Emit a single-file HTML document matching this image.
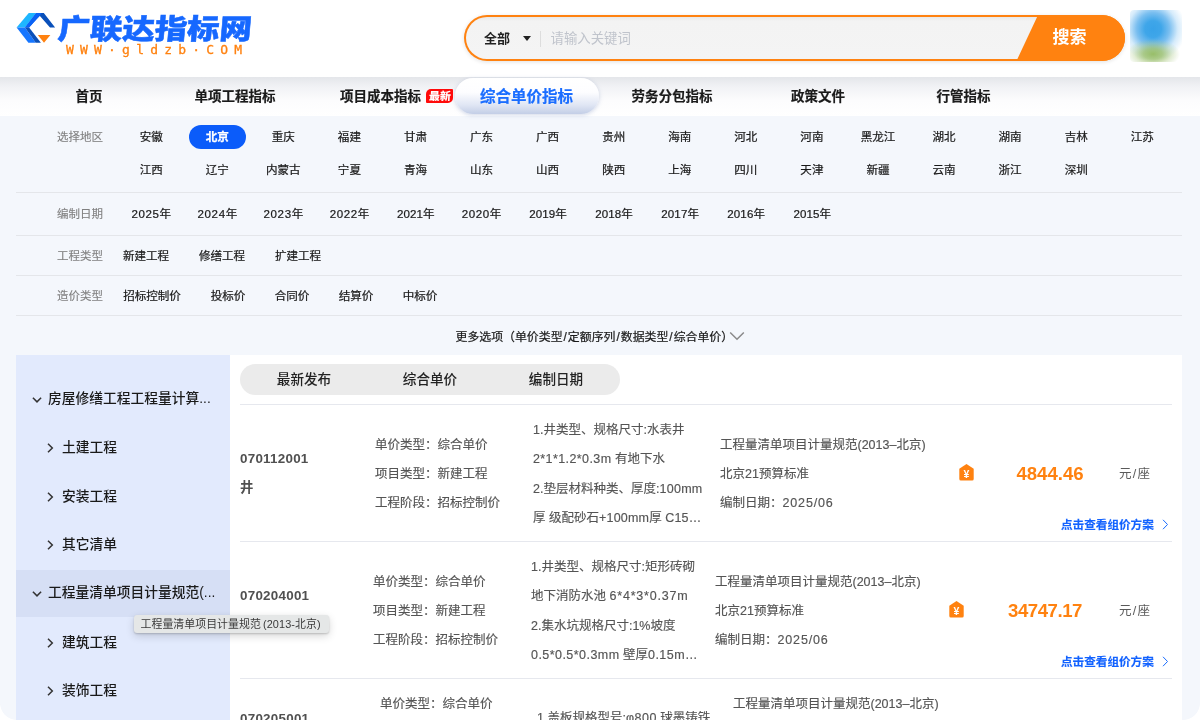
<!DOCTYPE html>
<html lang="zh-CN">
<head>
<meta charset="utf-8">
<title>广联达指标网 - 综合单价指标</title>
<style>
*{box-sizing:border-box;margin:0;padding:0}
html,body{width:1200px;height:720px;overflow:hidden}
body{position:relative;background:#f4f7fc;font-family:"Liberation Sans","Noto Sans CJK SC",sans-serif;color:#222;font-size:12px}
.abs{position:absolute;white-space:nowrap}
#wrap{position:absolute;left:0;top:0;width:1200px;height:720px;overflow:hidden;will-change:transform;transform:translateZ(0)}
.c{transform:translateX(-50%)}
/* header */
#header{position:absolute;left:0;top:0;width:1200px;height:77px;background:#fff}
#logo-cn{left:55.500px;top:10px;font-size:28px;line-height:40px;font-weight:900;color:#1668ff;-webkit-text-stroke:.5px #1668ff;letter-spacing:0;transform-origin:0 100%;transform:skewX(-5deg) scaleX(1.155)}
#logo-en{left:66px;top:42px;font-size:13px;line-height:16px;color:#ff8210;letter-spacing:6.2px;font-family:"DejaVu Sans Mono","Liberation Mono",monospace;font-weight:400;-webkit-text-stroke:.3px #ff8210}
#search{position:absolute;left:464px;top:14.500px;width:661px;height:46.500px;border-radius:24px;background:#ff8210;box-shadow:0 1px 4px rgba(0,0,0,.12);overflow:hidden}
#search .inp{position:absolute;left:2px;top:2px;right:30px;bottom:2px;border-radius:22px 0 0 22px;background:linear-gradient(#e9e9e9 0,#f3f3f3 4px,#f4f4f4 100%)}
#search .btn{position:absolute;right:0;top:0;width:87px;height:47px;background:#ff8210}
#search .btn:before{content:"";position:absolute;left:-22px;top:0;border-style:solid;border-width:0 0 47px 22px;border-color:transparent transparent #ff8210 transparent}
#search .btn span{position:absolute;left:-12px;width:87px;text-align:center;top:9.500px;font-size:17px;line-height:28px;color:#fff;font-weight:700;letter-spacing:0}
#avatar{position:absolute;left:1130px;top:10px;width:52px;height:52px;border-radius:4px;overflow:hidden;filter:blur(.6px)}
/* nav */
#nav{position:absolute;left:0;top:77px;width:1200px;height:39px;background:linear-gradient(#e4e6ea 0,#f1f2f5 25%,#fcfcfd 60%,#fff 100%)}
.nv{top:87px;font-size:13.500px;line-height:20px;font-weight:700;color:#1a1a1a;-webkit-text-stroke:.2px}
#tab-on{position:absolute;left:455px;top:78px;width:144px;height:36px;border-radius:18px;background:linear-gradient(#fff 0,#fdfdff 40%,#e0e6f4 75%,#c3cee6 100%);box-shadow:0 1px 4px rgba(120,140,190,.35)}
/* filter */
.fl{color:#808080;-webkit-text-stroke:.12px #808080;font-size:11.500px;line-height:18px}
.fi{color:#1a1a1a;-webkit-text-stroke:.22px #1a1a1a;font-size:11.550px;line-height:18px}
.sl{font-style:normal;margin:0 1px}
.hr{position:absolute;left:16px;width:1166px;height:1px;background:#e4e6ea}
/* main */
#panel{position:absolute;left:16px;top:355px;width:1166px;height:380px;background:#fff;overflow:hidden}
#side{position:absolute;left:0;top:0;width:214px;height:380px;background:#e2eafd}
#side .sel{position:absolute;left:0;top:214.500px;width:214px;height:47.500px;background:#d6dff5}
.sd{font-size:13.750px;line-height:20px;color:#1a1a1a;font-weight:500}
.ar{position:absolute;width:10px;height:10px}
#tabs{position:absolute;left:240px;top:364px;width:380px;height:31px;border-radius:16px;background:#ebebeb}
.tb{top:370px;font-size:13.600px;line-height:20px;font-weight:500;color:#222}
.rl{position:absolute;left:240px;width:932px;height:1px;background:#e6e8ee}
.code{font-size:13.400px;line-height:20px;font-weight:700;color:#505050;letter-spacing:.25px;margin-top:.7px}
.tx{font-size:12.500px;line-height:18px;color:#555;-webkit-text-stroke:.15px #555;margin-top:1px}
.price{font-size:18.600px;line-height:24px;font-weight:700;color:#ff8210;margin-top:1px}
.unit{font-size:12.500px;line-height:18px;color:#5a5a5a;margin-top:.5px}
.lk{font-size:11.600px;line-height:16px;font-weight:700;color:#1262ff;-webkit-text-stroke:.15px #1262ff;margin-top:.8px}
#tip{position:absolute;left:133.500px;top:614.500px;width:195px;height:18.500px;border-radius:3px;background:#e5e7e7;box-shadow:0 1px 2px rgba(0,0,0,.18),0 3px 8px rgba(0,0,0,.16);font-size:10.900px;line-height:18.500px;color:#3a3a3a;padding-left:7px;white-space:nowrap;letter-spacing:.05px}
</style>
</head>
<body>
<div id="wrap">
<div id="header">
<svg class="abs" style="left:0;top:0" width="70" height="60" viewBox="0 0 70 60">
<polygon points="16.6,27.6 28.75,13 36.2,13 25,27.6" fill="#1eb6ff"/>
<polygon points="25,27.6 36.2,13 40.8,13 39.7,15.8 29.1,27.6" fill="#0b62f5"/>
<polygon points="36.2,13 43.8,13 55.1,27.6 50,27.6 39.7,15.8 38,17.6 36,15" fill="#0a50ba"/>
<polygon points="36.2,13 41.5,13 39.7,15.8 29.1,27.6 25,27.6" fill="#0b62f5"/>
<polygon points="16.6,27.6 25,27.6 35.7,42.8 28.4,42.8" fill="#1676ff"/>
<polygon points="25,27.6 29.1,27.6 40.9,42.8 35.7,42.8" fill="#0a50ba"/>
<polygon points="37.8,35 50.4,35 44,42.8" fill="#ff8210"/>
</svg>
<div class="abs" id="logo-cn">广联达指标网</div>
<div class="abs" id="logo-en">WWW·gldzb·COM</div>
<div id="search">
<div class="inp"></div>
<div class="abs" style="left:20px;top:14px;font-size:13px;line-height:20px;font-weight:700;color:#222">全部</div>
<div class="abs" style="left:59px;top:21px;width:0;height:0;border-style:solid;border-width:5px 4px 0 4px;border-color:#222 transparent transparent transparent"></div>
<div class="abs" style="left:76px;top:16px;width:1px;height:16px;background:#ddd"></div>
<div class="abs" style="left:86.500px;top:14px;font-size:13.400px;line-height:20px;color:#c0c4cc">请输入关键词</div>
<div class="btn"><span>搜索</span></div>
</div>
<div id="avatar"><div style="position:absolute;left:0;top:0;width:52px;height:52px;background:radial-gradient(ellipse 27px 15px at 23px 44px,rgba(152,190,105,1) 0,rgba(156,192,108,.8) 35%,rgba(170,200,130,.35) 70%,rgba(255,255,255,0) 100%),radial-gradient(circle 33px at 23px 19px,#38a2e8 0,#3fa6e9 25%,rgba(90,175,236,.8) 50%,rgba(150,205,245,.4) 75%,rgba(255,255,255,0) 100%),#fff"></div></div>
</div>
<div id="nav">
<div id="tab-on" style="top:1px"></div>
</div>
<div class="abs nv c" style="left:89px">首页</div>
<div class="abs nv c" style="left:235px">单项工程指标</div>
<div class="abs nv c" style="left:380.5px">项目成本指标</div>
<div class="abs nv c" style="left:672px">劳务分包指标</div>
<div class="abs nv c" style="left:818px">政策文件</div>
<div class="abs nv c" style="left:963.5px">行管指标</div>
<div class="abs nv c" style="left:526.5px;font-size:15.5px;top:87.300px;color:#1a6dff">综合单价指标</div>
<div class="abs" style="left:426px;top:89px;width:27px;height:14px;background:#ff0a0a;border-radius:5px 1px 5px 1px;font-size:11px;line-height:14px;font-weight:900;color:#fff;text-align:center"><span style="display:inline-block;transform:skewX(-3deg)">最新</span></div>
<div class="abs fl" style="left:57px;top:128px">选择地区</div>
<div class="abs" style="left:189px;top:125.300px;width:57px;height:23.500px;border-radius:12px;background:#0b5cfa"></div>
<div class="abs fi c" style="left:151.2px;top:128px">安徽</div>
<div class="abs fi c" style="left:217.3px;top:128px;color:#fff;font-weight:700;-webkit-text-stroke:.25px #fff">北京</div>
<div class="abs fi c" style="left:283.3px;top:128px">重庆</div>
<div class="abs fi c" style="left:349.4px;top:128px">福建</div>
<div class="abs fi c" style="left:415.5px;top:128px">甘肃</div>
<div class="abs fi c" style="left:481.5px;top:128px">广东</div>
<div class="abs fi c" style="left:547.6px;top:128px">广西</div>
<div class="abs fi c" style="left:613.7px;top:128px">贵州</div>
<div class="abs fi c" style="left:679.8px;top:128px">海南</div>
<div class="abs fi c" style="left:745.8px;top:128px">河北</div>
<div class="abs fi c" style="left:811.9px;top:128px">河南</div>
<div class="abs fi c" style="left:878.0px;top:128px">黑龙江</div>
<div class="abs fi c" style="left:944.0px;top:128px">湖北</div>
<div class="abs fi c" style="left:1010.1px;top:128px">湖南</div>
<div class="abs fi c" style="left:1076.2px;top:128px">吉林</div>
<div class="abs fi c" style="left:1142.2px;top:128px">江苏</div>
<div class="abs fi c" style="left:151.2px;top:161px">江西</div>
<div class="abs fi c" style="left:217.3px;top:161px">辽宁</div>
<div class="abs fi c" style="left:283.3px;top:161px">内蒙古</div>
<div class="abs fi c" style="left:349.4px;top:161px">宁夏</div>
<div class="abs fi c" style="left:415.5px;top:161px">青海</div>
<div class="abs fi c" style="left:481.5px;top:161px">山东</div>
<div class="abs fi c" style="left:547.6px;top:161px">山西</div>
<div class="abs fi c" style="left:613.7px;top:161px">陕西</div>
<div class="abs fi c" style="left:679.8px;top:161px">上海</div>
<div class="abs fi c" style="left:745.8px;top:161px">四川</div>
<div class="abs fi c" style="left:811.9px;top:161px">天津</div>
<div class="abs fi c" style="left:878.0px;top:161px">新疆</div>
<div class="abs fi c" style="left:944.0px;top:161px">云南</div>
<div class="abs fi c" style="left:1010.1px;top:161px">浙江</div>
<div class="abs fi c" style="left:1076.2px;top:161px">深圳</div>
<div class="hr" style="top:192px"></div>
<div class="abs fl" style="left:57px;top:205px">编制日期</div>
<div class="abs fi c" style="left:151.6px;top:205px;letter-spacing:.6px">2025年</div>
<div class="abs fi c" style="left:217.7px;top:205px;letter-spacing:.6px">2024年</div>
<div class="abs fi c" style="left:283.7px;top:205px;letter-spacing:.6px">2023年</div>
<div class="abs fi c" style="left:349.8px;top:205px;letter-spacing:.6px">2022年</div>
<div class="abs fi c" style="left:415.9px;top:205px;letter-spacing:.1px">2021年</div>
<div class="abs fi c" style="left:481.9px;top:205px;letter-spacing:.6px">2020年</div>
<div class="abs fi c" style="left:548.0px;top:205px;letter-spacing:.1px">2019年</div>
<div class="abs fi c" style="left:614.1px;top:205px;letter-spacing:.1px">2018年</div>
<div class="abs fi c" style="left:680.2px;top:205px;letter-spacing:.1px">2017年</div>
<div class="abs fi c" style="left:746.2px;top:205px;letter-spacing:.1px">2016年</div>
<div class="abs fi c" style="left:812.3px;top:205px;letter-spacing:.1px">2015年</div>
<div class="hr" style="top:235px"></div>
<div class="abs fl" style="left:57px;top:247px">工程类型</div>
<div class="abs fi c" style="left:146px;top:247px">新建工程</div>
<div class="abs fi c" style="left:222px;top:247px">修缮工程</div>
<div class="abs fi c" style="left:298px;top:247px">扩建工程</div>
<div class="hr" style="top:275px"></div>
<div class="abs fl" style="left:57px;top:287px">造价类型</div>
<div class="abs fi c" style="left:152px;top:287px">招标控制价</div>
<div class="abs fi c" style="left:228px;top:287px">投标价</div>
<div class="abs fi c" style="left:292px;top:287px">合同价</div>
<div class="abs fi c" style="left:356px;top:287px">结算价</div>
<div class="abs fi c" style="left:420px;top:287px">中标价</div>
<div class="hr" style="top:315px"></div>
<div class="abs fi" style="left:455.500px;top:328px;font-size:11.900px">更多选项（单价类型<i class="sl">/</i>定额序列<i class="sl">/</i>数据类型<i class="sl">/</i>综合单价）</div>
<svg class="abs" style="left:728.500px;top:331px" width="16" height="10" viewBox="0 0 16 10"><polyline points="1.200,1.500 8,8.300 14.800,1.500" fill="none" stroke="#8a8a8a" stroke-width="1.500"/></svg>
<div id="panel"><div id="side"><div class="sel"></div></div></div>
<div class="abs sd" style="left:48px;top:389px">房屋修缮工程工程量计算...</div>
<svg class="ar" style="left:32px;top:395px" viewBox="0 0 10 10"><polyline points="0.900,2.800 5,6.900 9.100,2.800" fill="none" stroke="#333" stroke-width="1.500"/></svg>
<div class="abs sd" style="left:62px;top:438px">土建工程</div>
<svg class="ar" style="left:45px;top:443px" viewBox="0 0 10 10"><polyline points="3,0.800 7.300,5 3,9.200" fill="none" stroke="#333" stroke-width="1.500"/></svg>
<div class="abs sd" style="left:62px;top:487px">安装工程</div>
<svg class="ar" style="left:45px;top:492px" viewBox="0 0 10 10"><polyline points="3,0.800 7.300,5 3,9.200" fill="none" stroke="#333" stroke-width="1.500"/></svg>
<div class="abs sd" style="left:62px;top:535px">其它清单</div>
<svg class="ar" style="left:45px;top:540px" viewBox="0 0 10 10"><polyline points="3,0.800 7.300,5 3,9.200" fill="none" stroke="#333" stroke-width="1.500"/></svg>
<div class="abs sd" style="left:48px;top:583px">工程量清单项目计量规范(...</div>
<svg class="ar" style="left:32px;top:589px" viewBox="0 0 10 10"><polyline points="0.900,2.800 5,6.900 9.100,2.800" fill="none" stroke="#333" stroke-width="1.500"/></svg>
<div class="abs sd" style="left:62px;top:633px">建筑工程</div>
<svg class="ar" style="left:45px;top:638px" viewBox="0 0 10 10"><polyline points="3,0.800 7.300,5 3,9.200" fill="none" stroke="#333" stroke-width="1.500"/></svg>
<div class="abs sd" style="left:62px;top:681px">装饰工程</div>
<svg class="ar" style="left:45px;top:686px" viewBox="0 0 10 10"><polyline points="3,0.800 7.300,5 3,9.200" fill="none" stroke="#333" stroke-width="1.500"/></svg>
<div id="tabs"></div>
<div class="abs tb c" style="left:304px">最新发布</div>
<div class="abs tb c" style="left:430px">综合单价</div>
<div class="abs tb c" style="left:556px">编制日期</div>
<div class="rl" style="top:404px"></div>
<div class="rl" style="top:541px"></div>
<div class="rl" style="top:678px"></div>
<div class="abs code" style="left:240px;top:448px">070112001</div>
<div class="abs code" style="left:240px;top:477px">井</div>
<div class="abs tx" style="left:375px;top:435px">单价类型：综合单价</div>
<div class="abs tx" style="left:375px;top:464px">项目类型：新建工程</div>
<div class="abs tx" style="left:375px;top:493px">工程阶段：招标控制价</div>
<div class="abs tx" style="left:533px;top:420.0px">1.井类型、规格尺寸:水表井</div>
<div class="abs tx" style="left:533px;top:449.3px"><span style="letter-spacing:0.4px">2*1*1.2*0.3m</span> 有地下水</div>
<div class="abs tx" style="left:533px;top:478.6px">2.垫层材料种类、厚度:<span style="letter-spacing:0.3px">100mm</span></div>
<div class="abs tx" style="left:533px;top:507.9px">厚 级配砂石<span style="letter-spacing:0.2px">+100mm</span>厚 <span style="letter-spacing:0.2px">C15…</span></div>
<div class="abs tx" style="left:720px;top:435px">工程量清单项目计量规范(2013–北京)</div>
<div class="abs tx" style="left:720px;top:464px">北京21预算标准</div>
<div class="abs tx" style="left:720px;top:493px">编制日期：<span style="letter-spacing:.85px">2025/06</span></div>
<svg class="abs" style="left:958.5px;top:464px" width="15" height="17" viewBox="0 0 15 17"><path d="M7.500 0 L14.700 4.800 V15 Q14.700 16.500 13.200 16.500 H1.800 Q0.300 16.500 0.300 15 V4.800 Z" fill="#ff8210"/><text x="7.500" y="14" font-size="10.500" font-weight="700" fill="#fff" text-anchor="middle" font-family="Liberation Sans, sans-serif">¥</text></svg>
<div class="abs price c" style="left:1050px;top:461px">4844.46</div>
<div class="abs unit" style="left:1119px;top:464px">元<i class="sl" style="margin:0 1.300px">/</i>座</div>
<div class="abs lk" style="left:1061px;top:516px">点击查看组价方案</div>
<svg class="abs" style="left:1161px;top:518px" width="8" height="12" viewBox="0 0 8 12"><polyline points="2,1.800 6.500,6.500 2,11.200" fill="none" stroke="#1a6dff" stroke-width="1"/></svg>
<div class="abs code" style="left:240px;top:585px">070204001</div>
<div class="abs tx" style="left:373px;top:572px">单价类型：综合单价</div>
<div class="abs tx" style="left:373px;top:601px">项目类型：新建工程</div>
<div class="abs tx" style="left:373px;top:630px">工程阶段：招标控制价</div>
<div class="abs tx" style="left:531px;top:557.0px">1.井类型、规格尺寸:矩形砖砌</div>
<div class="abs tx" style="left:531px;top:586.3px">地下消防水池 <span style="letter-spacing:0.8px">6*4*3*0.37m</span></div>
<div class="abs tx" style="left:531px;top:615.6px">2.集水坑规格尺寸:1%坡度</div>
<div class="abs tx" style="left:531px;top:644.9px"><span style="letter-spacing:0.45px">0.5*0.5*0.3mm</span> 壁厚<span style="letter-spacing:0.45px">0.15m…</span></div>
<div class="abs tx" style="left:715px;top:572px">工程量清单项目计量规范(2013–北京)</div>
<div class="abs tx" style="left:715px;top:601px">北京21预算标准</div>
<div class="abs tx" style="left:715px;top:630px">编制日期：<span style="letter-spacing:.85px">2025/06</span></div>
<svg class="abs" style="left:948.5px;top:601px" width="15" height="17" viewBox="0 0 15 17"><path d="M7.500 0 L14.700 4.800 V15 Q14.700 16.500 13.200 16.500 H1.800 Q0.300 16.500 0.300 15 V4.800 Z" fill="#ff8210"/><text x="7.500" y="14" font-size="10.500" font-weight="700" fill="#fff" text-anchor="middle" font-family="Liberation Sans, sans-serif">¥</text></svg>
<div class="abs price c" style="left:1045px;top:598px;letter-spacing:-.45px">34747.17</div>
<div class="abs unit" style="left:1119px;top:601px">元<i class="sl" style="margin:0 1.300px">/</i>座</div>
<div class="abs lk" style="left:1061px;top:653px">点击查看组价方案</div>
<svg class="abs" style="left:1161px;top:655px" width="8" height="12" viewBox="0 0 8 12"><polyline points="2,1.800 6.500,6.500 2,11.200" fill="none" stroke="#1a6dff" stroke-width="1"/></svg>
<div class="abs code" style="left:240px;top:708px">070205001</div>
<div class="abs tx" style="left:380px;top:694px">单价类型：综合单价</div>
<div class="abs tx" style="left:537px;top:708px">1.盖板规格型号:<span style="letter-spacing:.5px">φ800</span> 球墨铸铁</div>
<div class="abs tx" style="left:733px;top:694px">工程量清单项目计量规范(2013–北京)</div>
<div class="abs" style="left:0;top:703px;width:17px;height:17px;background:radial-gradient(circle 17px at 17px 0,rgba(255,255,255,0) 0,rgba(255,255,255,0) 16.500px,#fff 17.300px)"></div>
<div class="abs" style="left:1183px;top:703px;width:17px;height:17px;background:radial-gradient(circle 17px at 0 0,rgba(255,255,255,0) 0,rgba(255,255,255,0) 16.500px,#fff 17.300px)"></div>
<div id="tip">工程量清单项目计量规范 <span style="letter-spacing:.1px;margin-left:-1px">(2013-</span>北京<span>)</span></div>
</div>
</body>
</html>
